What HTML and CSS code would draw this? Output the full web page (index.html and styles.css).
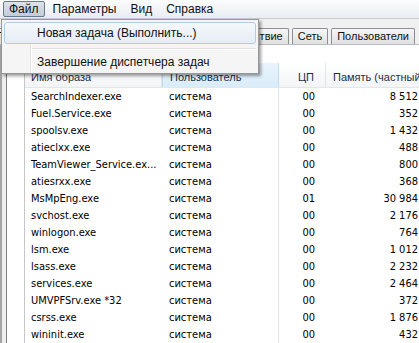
FILE: index.html
```html
<!DOCTYPE html>
<html lang="ru">
<head>
<meta charset="utf-8">
<title>Диспетчер задач</title>
<link rel="stylesheet" href="styles.css">
</head>
<body>
<div class="window">
  <div class="menubar">
    <span class="mi active">Файл</span>
    <span class="mi">Параметры</span>
    <span class="mi">Вид</span>
    <span class="mi">Справка</span>
  </div>
  <div class="tabrow">
    <span class="tab">Приложения</span>
    <span class="tab">Процессы</span>
    <span class="tab">Службы</span>
    <span class="tab">Быстродействие</span>
    <span class="tab">Сеть</span>
    <span class="tab">Пользователи</span>
  </div>
  <div class="content">
    <div class="frame"></div>
    <div class="gutter"></div>
    <div class="list">
      <div class="spacer"></div>
      <div class="hdr">
        <span class="hc name">Имя образа</span>
        <span class="hc user">Пользователь</span>
        <span class="hc cpu">ЦП</span>
        <span class="hc mem">Память (частный рабочий набор)</span>
      </div>
      <div class="rows">
        <div class="row"><span class="c name">SearchIndexer.exe</span><span class="c user">система</span><span class="c cpu">00</span><span class="c mem">8 512</span></div>
        <div class="row"><span class="c name">Fuel.Service.exe</span><span class="c user">система</span><span class="c cpu">00</span><span class="c mem">352</span></div>
        <div class="row"><span class="c name">spoolsv.exe</span><span class="c user">система</span><span class="c cpu">00</span><span class="c mem">1 432</span></div>
        <div class="row"><span class="c name">atieclxx.exe</span><span class="c user">система</span><span class="c cpu">00</span><span class="c mem">488</span></div>
        <div class="row"><span class="c name">TeamViewer_Service.ex...</span><span class="c user">система</span><span class="c cpu">00</span><span class="c mem">800</span></div>
        <div class="row"><span class="c name">atiesrxx.exe</span><span class="c user">система</span><span class="c cpu">00</span><span class="c mem">368</span></div>
        <div class="row"><span class="c name">MsMpEng.exe</span><span class="c user">система</span><span class="c cpu">01</span><span class="c mem">30 984</span></div>
        <div class="row"><span class="c name">svchost.exe</span><span class="c user">система</span><span class="c cpu">00</span><span class="c mem">2 176</span></div>
        <div class="row"><span class="c name">winlogon.exe</span><span class="c user">система</span><span class="c cpu">00</span><span class="c mem">764</span></div>
        <div class="row"><span class="c name">lsm.exe</span><span class="c user">система</span><span class="c cpu">00</span><span class="c mem">1 012</span></div>
        <div class="row"><span class="c name">lsass.exe</span><span class="c user">система</span><span class="c cpu">00</span><span class="c mem">2 232</span></div>
        <div class="row"><span class="c name">services.exe</span><span class="c user">система</span><span class="c cpu">00</span><span class="c mem">2 464</span></div>
        <div class="row"><span class="c name">UMVPFSrv.exe *32</span><span class="c user">система</span><span class="c cpu">00</span><span class="c mem">372</span></div>
        <div class="row"><span class="c name">csrss.exe</span><span class="c user">система</span><span class="c cpu">00</span><span class="c mem">1 876</span></div>
        <div class="row"><span class="c name">wininit.exe</span><span class="c user">система</span><span class="c cpu">00</span><span class="c mem">432</span></div>
      </div>
    </div>
  </div>
  <div class="dropdown">
    <div class="ditem hover">Новая задача (Выполнить...)</div>
    <div class="dsep"></div>
    <div class="ditem">Завершение диспетчера задач</div>
  </div>
</div>
</body>
</html>
```
FILE: styles.css
```css
html, body {
  margin: 0;
  padding: 0;
}
body {
  width: 419px;
  height: 343px;
  overflow: hidden;
  background: #f0f0f0;
}
.window {
  position: relative;
  width: 419px;
  height: 343px;
  display: flex;
  flex-direction: column;
  overflow: hidden;
  font-family: "Liberation Sans", Arial, sans-serif;
  font-size: 11px;
  color: #000;
}
.menubar {
  height: 19px;
  flex: 0 0 19px;
  box-sizing: border-box;
  display: flex;
  align-items: center;
  gap: 2px;
  padding-left: 3px;
  background: linear-gradient(#fbfcfd, #e9edf2);
  border-bottom: 1px solid #c9ced6;
  font-size: 12px;
  color: #111;
}
.mi {
  height: 16px;
  line-height: 14px;
  padding: 0 5px;
  box-sizing: border-box;
  border: 1px solid transparent;
  border-radius: 2px;
}
.mi.active {
  border-color: #6b7888;
  background: linear-gradient(#dde3ea, #c3ccd7);
}
.tabrow {
  height: 26px;
  flex: 0 0 26px;
  box-sizing: border-box;
  display: flex;
  justify-content: flex-end;
  align-items: flex-end;
  gap: 3px;
  padding-right: 4px;
  overflow: hidden;
  background: #f0f0f0;
  border-bottom: 1px solid #b8bcc2;
}
.tab {
  flex: 0 0 auto;
  height: 16px;
  line-height: 15px;
  box-sizing: border-box;
  padding: 0 5px;
  border: 1px solid #8c8e94;
  border-bottom: none;
  border-radius: 2px 2px 0 0;
  background: linear-gradient(#f6f6f6, #e0e0e0);
  color: #111;
}
.content {
  flex: 1;
  display: flex;
  background: #fff;
}
.frame {
  width: 7px;
  flex: 0 0 7px;
  box-sizing: border-box;
  background: linear-gradient(to right, #a4a4a4 0, #a4a4a4 2px, #ededed 2px);
  border-right: 1px solid #7f7f7f;
}
.gutter {
  width: 18px;
  flex: 0 0 18px;
  box-sizing: border-box;
  background: #fff;
  border-right: 1px solid #c6c6c6;
}
.list {
  flex: 1;
  display: flex;
  flex-direction: column;
  min-width: 0;
}
.spacer {
  height: 18px;
  flex: 0 0 18px;
}
.hdr {
  height: 25px;
  flex: 0 0 25px;
  box-sizing: border-box;
  display: grid;
  grid-template-columns: 137px 117px 47px 94px;
  background: linear-gradient(#ffffff, #f2f4f6);
  border-bottom: 1px solid #e3e7eb;
  color: #1e2f44;
}
.hc {
  padding-top: 5px;
  line-height: 19px;
  white-space: nowrap;
  overflow: hidden;
  box-sizing: border-box;
}
.hc.name {
  padding-left: 6px;
  border-right: 1px solid #e2e6ea;
}
.hc.user {
  padding-left: 7px;
  background: linear-gradient(#e9f5fd, #d9ecfa);
  border-left: 1px solid #c2dcf1;
  border-right: 1px solid #c2dcf1;
}
.hc.cpu {
  text-align: right;
  padding-right: 11px;
  border-right: 1px solid #e2e6ea;
}
.hc.mem {
  padding-left: 7px;
}
.rows {
  display: flex;
  flex-direction: column;
}
.row {
  height: 17px;
  display: grid;
  grid-template-columns: 137px 117px 47px 92px;
  font-family: "DejaVu Sans Condensed", "DejaVu Sans", sans-serif;
  font-size: 11px;
  line-height: 17px;
}
.c {
  white-space: nowrap;
  overflow: hidden;
  box-sizing: border-box;
}
.c.name {
  padding-left: 6px;
}
.c.user {
  padding-left: 7px;
  border-right: 1px solid #dbeaf7;
}
.c.cpu {
  text-align: right;
  padding-right: 11px;
}
.c.mem {
  text-align: right;
}
.dropdown {
  position: absolute;
  left: 1px;
  top: 19px;
  width: 258px;
  box-sizing: border-box;
  padding: 2px 0 0 0;
  border: 1px solid #979797;
  background:
    linear-gradient(to right, transparent 28px, #e2e3e3 28px, #e2e3e3 29px, #ffffff 29px, #ffffff 30px, transparent 30px),
    #f5f5f5;
  box-shadow: 2px 2px 3px rgba(0, 0, 0, 0.4);
  font-size: 12px;
  color: #111;
}
.ditem {
  height: 22px;
  line-height: 20px;
  margin: 0 2px;
  padding-left: 32px;
  box-sizing: border-box;
  border: 1px solid transparent;
  border-radius: 3px;
  white-space: nowrap;
}
.ditem.hover {
  border-color: #b1cbe3;
  background: linear-gradient(#f4f8fb, #e5edf5);
}
.dsep {
  height: 2px;
  margin: 4px 2px 1px 30px;
  border-top: 1px solid #e0e0e0;
  background: #fff;
  box-sizing: border-box;
}
```
